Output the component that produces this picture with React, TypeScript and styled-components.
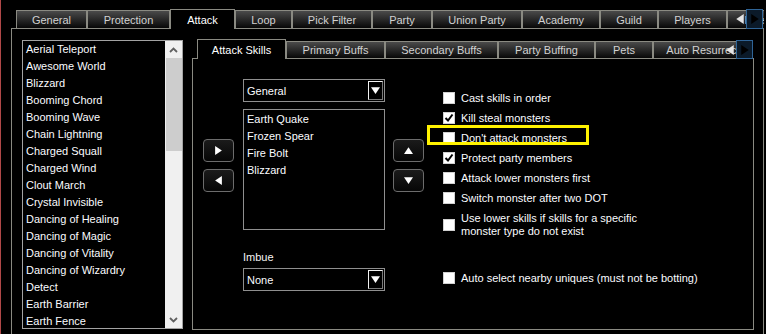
import React from "react";
import styled, { createGlobalStyle } from "styled-components";

const BORDER = "#8a8a82";

const GlobalStyle = createGlobalStyle`
  html, body {
    margin: 0;
    padding: 0;
    background: #000;
  }
  body {
    font-family: "Liberation Sans", Arial, sans-serif;
    font-size: 11px;
    color: #fff;
  }
`;

const Screen = styled.div`
  width: 766px;
  height: 334px;
  box-sizing: border-box;
  border-left: 1px solid #b04848;
  padding: 9px 2px 0 10px;
  overflow: hidden;
  background: #000;
`;

const TabStrip = styled.div`
  position: relative;
  z-index: 1;
  display: flex;
  align-items: flex-end;
  height: 20px;
  padding-left: 5px;
  margin-bottom: -1px;
  overflow: hidden;
`;

const Tab = styled.div<{ $active?: boolean; $inner?: boolean; $width: number }>`
  flex: none;
  box-sizing: border-box;
  width: ${(p) => p.$width}px;
  height: ${(p) => (p.$active ? 20 : p.$inner ? 18 : 19)}px;
  display: flex;
  align-items: center;
  justify-content: center;
  border: 1px solid ${BORDER};
  border-bottom: ${(p) => (p.$active ? "none" : `1px solid ${BORDER}`)};
  background: ${(p) =>
    p.$active ? "#000" : "linear-gradient(#4a4a4a, #070707)"};
  color: ${(p) => (p.$active ? "#fff" : "#d2d2d2")};
  white-space: nowrap;
  overflow: hidden;
`;

const Scroller = styled.div<{ $inner?: boolean }>`
  position: absolute;
  right: 1px;
  top: ${(p) => (p.$inner ? 1 : 0)}px;
  height: ${(p) => (p.$inner ? 19 : 20)}px;
  display: flex;
`;

const ScrollLeft = styled.div`
  width: 12px;
  display: flex;
  align-items: center;
  justify-content: center;
`;

const ScrollRight = styled.div`
  width: 17px;
  box-sizing: border-box;
  border: 1px solid #2f6496;
  background: #0b1a29;
  display: flex;
  align-items: center;
  justify-content: center;
`;

const Window = styled.div`
  display: flex;
  gap: 9px;
  border: 1px solid ${BORDER};
  padding: 10px 9px 10px 10px;
`;

const SkillList = styled.div`
  flex: none;
  width: 161px;
  height: 289px;
  margin-top: 1px;
  box-sizing: border-box;
  border: 1px solid #a3a3a3;
  display: flex;
`;

const SkillItems = styled.div`
  flex: 1;
  padding: 0 0 0 3px;
  overflow: hidden;
`;

const Item = styled.div`
  height: 17px;
  line-height: 17px;
  color: #fbfcff;
  white-space: nowrap;
`;

const ScrollBar = styled.div`
  width: 17px;
  background: #f0f0f0;
  display: flex;
  flex-direction: column;
`;

const ScrollArrow = styled.div`
  height: 17px;
  display: flex;
  align-items: center;
  justify-content: center;
`;

const ScrollThumb = styled.div`
  height: 93px;
  margin-left: 1px;
  background: #cdcdcd;
`;

const ScrollTrack = styled.div`
  flex: 1;
`;

const SettingsColumn = styled.div`
  flex: 1;
  min-width: 0;
  display: flex;
  flex-direction: column;
`;

const SettingsPanel = styled.div`
  height: 272px;
  box-sizing: border-box;
  border: 1px solid ${BORDER};
  display: flex;
  padding-left: 10px;
`;

const ButtonColumn = styled.div<{ $offset: number }>`
  margin-left: ${(p) => p.$offset}px;
  padding-top: 80px;
  display: flex;
  flex-direction: column;
  gap: 7px;
`;

const MoveButton = styled.div`
  width: 31px;
  height: 23px;
  box-sizing: border-box;
  border: 1px solid #6c6c6c;
  border-radius: 4px;
  background: linear-gradient(#1b1b1b, #060606);
  display: flex;
  align-items: center;
  justify-content: center;
`;

const SkillColumn = styled.div`
  margin-left: 9px;
  width: 142px;
  padding-top: 20px;
  display: flex;
  flex-direction: column;
`;

const Select = styled.div<{ $gap?: number }>`
  height: 23px;
  margin-top: ${(p) => p.$gap ?? 0}px;
  box-sizing: border-box;
  border: 1px solid #8f8f8f;
  display: flex;
  align-items: center;
  padding-left: 3px;
`;

const SelectText = styled.span`
  flex: 1;
  color: #fbfcff;
`;

const SelectButton = styled.span`
  width: 15px;
  height: 19px;
  margin-right: 1px;
  box-sizing: border-box;
  border: 1px solid #f2f2f2;
  border-right-color: #7a7a7a;
  border-bottom-color: #7a7a7a;
  background: #000;
  display: flex;
  align-items: center;
  justify-content: center;
`;

const SkillBox = styled.div`
  height: 121px;
  margin-top: 7px;
  box-sizing: border-box;
  border: 1px solid #8f8f8f;
  padding: 1px 0 0 3px;
`;

const FieldLabel = styled.div`
  margin-top: 21px;
  line-height: 13px;
  color: #f4f4f4;
`;

const Options = styled.div`
  margin-left: 19px;
  padding-top: 29px;
  display: flex;
  flex-direction: column;
`;

const OptionRow = styled.div<{ $gap?: number; $highlight?: boolean }>`
  position: relative;
  display: flex;
  align-items: center;
  gap: 6px;
  min-height: 20px;
  margin-top: ${(p) => p.$gap ?? 0}px;
  ${(p) =>
    p.$highlight &&
    `
    &::after {
      content: "";
      position: absolute;
      left: -16px;
      top: -3px;
      width: 162px;
      height: 20px;
      box-sizing: border-box;
      border: 3px solid #fff200;
    }
  `}
`;

const Box = styled.span`
  flex: none;
  width: 12px;
  height: 12px;
  box-sizing: border-box;
  border: 1px solid #d0d0d0;
  background: #fff;
  display: flex;
  align-items: center;
  justify-content: center;
`;

const OptionText = styled.span`
  line-height: 13px;
  color: #fbfcff;
  white-space: nowrap;
`;

type Dir = "up" | "down" | "left" | "right";

const Triangle = ({ dir, size = 7, color = "#fff" }: { dir: Dir; size?: number; color?: string }) => {
  const pts: Record<Dir, string> = {
    up: "0,6 4,0 8,6",
    down: "0,0 8,0 4,6",
    left: "6,0 6,8 0,4",
    right: "0,0 6,4 0,8",
  };
  const vertical = dir === "up" || dir === "down";
  return (
    <svg
      width={vertical ? size + 1 : size - 1}
      height={vertical ? size - 1 : size + 1}
      viewBox={vertical ? "0 0 8 6" : "0 0 6 8"}
    >
      <polygon points={pts[dir]} fill={color} />
    </svg>
  );
};

const Chevron = ({ up }: { up?: boolean }) => (
  <svg width="9" height="6" viewBox="0 0 9 6">
    <polyline
      points={up ? "1,5 4.5,1.5 8,5" : "1,1 4.5,4.5 8,1"}
      fill="none"
      stroke="#606060"
      strokeWidth="1.8"
    />
  </svg>
);

const Check = () => (
  <svg width="10" height="10" viewBox="0 0 10 10">
    <polyline points="1.5,5 4,7.5 8.5,1.5" fill="none" stroke="#000" strokeWidth="2" />
  </svg>
);

const mainTabs = [
  { label: "General", width: 71 },
  { label: "Protection", width: 83 },
  { label: "Attack", width: 65 },
  { label: "Loop", width: 57 },
  { label: "Pick Filter", width: 80 },
  { label: "Party", width: 60 },
  { label: "Union Party", width: 90 },
  { label: "Academy", width: 78 },
  { label: "Guild", width: 58 },
  { label: "Players", width: 69 },
  { label: "Inventory", width: 80 },
];

const subTabs = [
  { label: "Attack Skills", width: 89 },
  { label: "Primary Buffs", width: 99 },
  { label: "Secondary Buffs", width: 113 },
  { label: "Party Buffing", width: 97 },
  { label: "Pets", width: 58 },
  { label: "Auto Resurrect", width: 100 },
];

const skills = [
  "Aerial Teleport",
  "Awesome World",
  "Blizzard",
  "Booming Chord",
  "Booming Wave",
  "Chain Lightning",
  "Charged Squall",
  "Charged Wind",
  "Clout March",
  "Crystal Invisible",
  "Dancing of Healing",
  "Dancing of Magic",
  "Dancing of Vitality",
  "Dancing of Wizardry",
  "Detect",
  "Earth Barrier",
  "Earth Fence",
];

const attackSkills = ["Earth Quake", "Frozen Spear", "Fire Bolt", "Blizzard"];

const options = [
  { label: "Cast skills in order", checked: false },
  { label: "Kill steal monsters", checked: true },
  { label: "Don't attack monsters", checked: false, highlight: true },
  { label: "Protect party members", checked: true },
  { label: "Attack lower monsters first", checked: false },
  { label: "Switch monster after two DOT", checked: false },
];

const TabScroll = ({ inner }: { inner?: boolean }) => (
  <Scroller $inner={inner}>
    <ScrollLeft>
      <Triangle dir="left" size={9} color="#e4e4e4" />
    </ScrollLeft>
    <ScrollRight>
      <Triangle dir="right" size={9} color="#000" />
    </ScrollRight>
  </Scroller>
);

const Dropdown = ({ value, gap }: { value: string; gap?: number }) => (
  <Select $gap={gap}>
    <SelectText>{value}</SelectText>
    <SelectButton>
      <Triangle dir="down" size={8} />
    </SelectButton>
  </Select>
);

const Option = ({
  checked,
  highlight,
  gap,
  children,
}: {
  checked?: boolean;
  highlight?: boolean;
  gap?: number;
  children: React.ReactNode;
}) => (
  <OptionRow $gap={gap} $highlight={highlight}>
    <Box>{checked ? <Check /> : null}</Box>
    <OptionText>{children}</OptionText>
  </OptionRow>
);

const App = () => {
  return (
    <>
      <GlobalStyle />
      <Screen>
        <TabStrip>
          {mainTabs.map((t) => (
            <Tab key={t.label} $width={t.width} $active={t.label === "Attack"}>
              {t.label}
            </Tab>
          ))}
          <TabScroll />
        </TabStrip>
        <Window>
          <SkillList>
            <SkillItems>
              {skills.map((s) => (
                <Item key={s}>{s}</Item>
              ))}
            </SkillItems>
            <ScrollBar>
              <ScrollArrow>
                <Chevron up />
              </ScrollArrow>
              <ScrollThumb />
              <ScrollTrack />
              <ScrollArrow>
                <Chevron />
              </ScrollArrow>
            </ScrollBar>
          </SkillList>

          <SettingsColumn>
            <TabStrip>
              {subTabs.map((t) => (
                <Tab
                  key={t.label}
                  $inner
                  $width={t.width}
                  $active={t.label === "Attack Skills"}
                >
                  {t.label}
                </Tab>
              ))}
              <TabScroll inner />
            </TabStrip>
            <SettingsPanel>
              <ButtonColumn $offset={0}>
                <MoveButton>
                  <Triangle dir="right" size={8} />
                </MoveButton>
                <MoveButton>
                  <Triangle dir="left" size={8} />
                </MoveButton>
              </ButtonColumn>

              <SkillColumn>
                <Dropdown value="General" />
                <SkillBox>
                  {attackSkills.map((s) => (
                    <Item key={s}>{s}</Item>
                  ))}
                </SkillBox>
                <FieldLabel>Imbue</FieldLabel>
                <Dropdown value="None" gap={4} />
              </SkillColumn>

              <ButtonColumn $offset={8}>
                <MoveButton>
                  <Triangle dir="up" size={8} />
                </MoveButton>
                <MoveButton>
                  <Triangle dir="down" size={8} />
                </MoveButton>
              </ButtonColumn>

              <Options>
                {options.map((o) => (
                  <Option key={o.label} checked={o.checked} highlight={o.highlight}>
                    {o.label}
                  </Option>
                ))}
                <Option gap={4}>
                  Use lower skills if skills for a specific
                  <br />
                  monster type do not exist
                </Option>
                <Option gap={30}>Auto select nearby uniques (must not be botting)</Option>
              </Options>
            </SettingsPanel>
          </SettingsColumn>
        </Window>
      </Screen>
    </>
  );
};

export default App;
